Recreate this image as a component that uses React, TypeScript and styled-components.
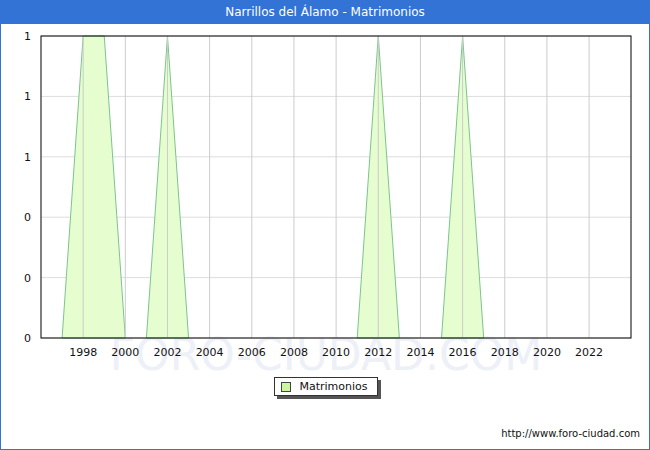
import styled, { createGlobalStyle } from 'styled-components'

const Global = createGlobalStyle`
  body { margin: 0; font-family: "DejaVu Sans", Verdana, sans-serif; }
`

const Frame = styled.div`
  width: 650px;
  height: 450px;
  box-sizing: border-box;
  border: 1px solid #3373d6;
  border-top: none;
  background: #fff;
  display: flex;
  flex-direction: column;
  position: relative;
  overflow: hidden;
`

const TitleBar = styled.div`
  height: 24px;
  margin: 0 -1px;
  background: #3373d6;
  color: #fff;
  font-size: 12px;
  display: flex;
  align-items: center;
  justify-content: center;
`

const LegendRow = styled.div`
  display: flex;
  justify-content: center;
  margin-top: 4px;
  padding-left: 2px;
`

const LegendBox = styled.div`
  display: flex;
  align-items: center;
  gap: 8px;
  height: 17px;
  padding: 0 9px 0 6px;
  border: 1px solid #333;
  font-size: 11px;
  color: #111;
  box-shadow: 3px 3px 0 #555;
  background: #fff;
`

const Swatch = styled.span`
  width: 8px;
  height: 8px;
  border: 1px solid #444;
  background: #ccf5a0;
`

const Footer = styled.div`
  margin-top: auto;
  padding: 0 9px 10px 0;
  text-align: right;
  font-size: 10px;
  color: #111;
`

const X0 = 40
const STEP = 21.08
const px = (year: number) => X0 + (year - 1996) * STEP
const TOP = 12
const BOT = 314
const peaks: number[][] = [
  [1997, 1998, 1999, 2000],
  [2001, 2002, 2003],
  [2011, 2012, 2013],
  [2015, 2016, 2017],
]
const yLines = [12, 72.4, 132.8, 193.2, 253.6, 314]
const yLabels = ['1', '1', '1', '0', '0', '0']
const years = Array.from({ length: 13 }, (_, i) => 1998 + i * 2)

const Chart = () => (
  <svg width={648} height={349} style={{ display: 'block' }}>
    <text x={325} y={346} textAnchor='middle' fontSize={44} fill='#eef0f8' fontFamily='"DejaVu Sans", sans-serif'>FORO-CIUDAD.COM</text>
    {yLines.map(y => <line key={y} x1={X0} x2={630} y1={y} y2={y} stroke='#dddddd' />)}
    {peaks.map((p, i) => {
      const pts = p.map((yr, j) => `${px(yr)},${j === 0 || j === p.length - 1 ? BOT : TOP}`).join(' ')
      return <polygon key={i} points={pts} fill='#e6fdd0' stroke='#7cc48e' strokeWidth={1} />
    })}
    {years.map(yr => <line key={yr} x1={px(yr)} x2={px(yr)} y1={TOP} y2={BOT} stroke='#cccccc' />)}
    <rect x={X0} y={TOP} width={590} height={BOT - TOP} fill='none' stroke='#000' />
    {yLabels.map((l, i) => (
      <text key={i} x={30} y={yLines[i] + 4} textAnchor='end' fontSize={11} fill='#111'>{l}</text>
    ))}
    {years.map(yr => (
      <text key={yr} x={px(yr)} y={332} textAnchor='middle' fontSize={11} fill='#111'>{yr}</text>
    ))}
  </svg>
)

export default function App () {
  return (
    <Frame>
      <Global />
      <TitleBar>Narrillos del Álamo - Matrimonios</TitleBar>
      <Chart />
      <LegendRow>
        <LegendBox><Swatch />Matrimonios</LegendBox>
      </LegendRow>
      <Footer>http://www.foro-ciudad.com</Footer>
    </Frame>
  )
}
